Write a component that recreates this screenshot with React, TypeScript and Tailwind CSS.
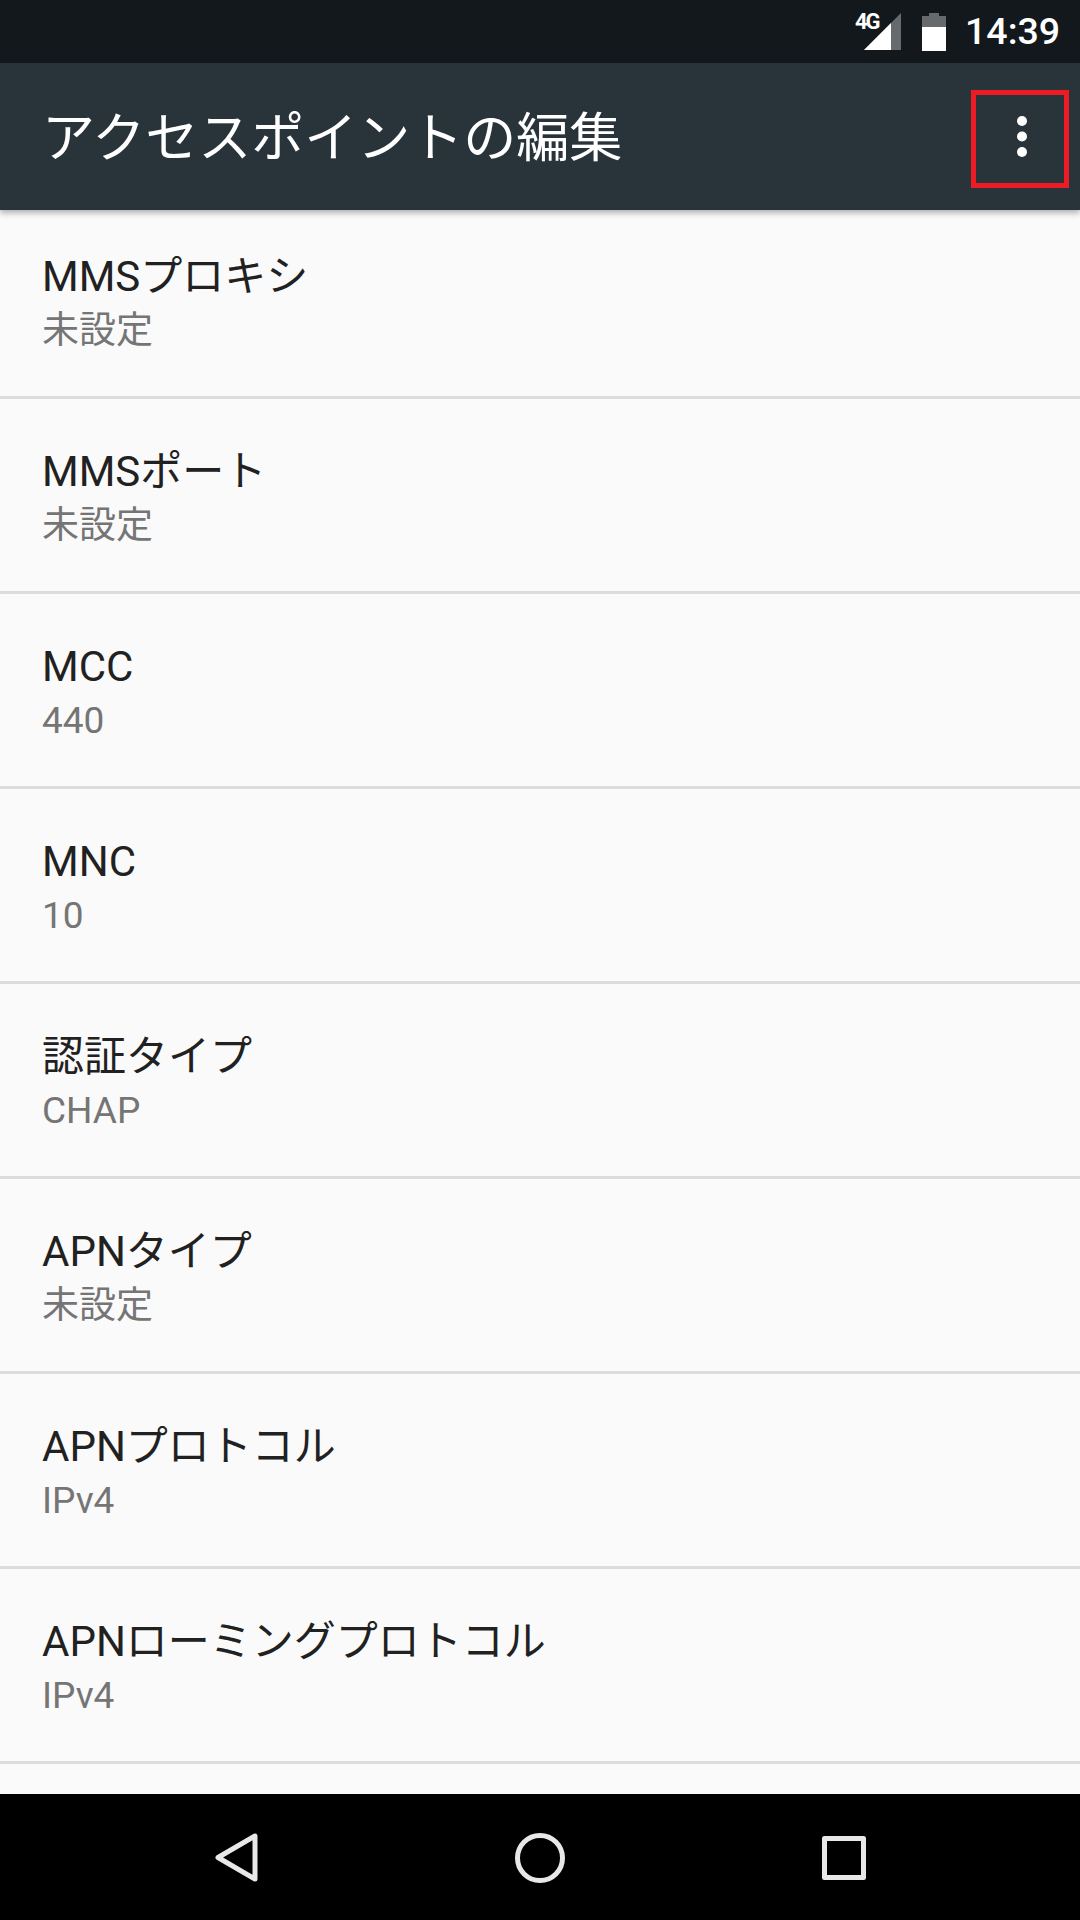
const rows = [
  { title: "MMSプロキシ", value: "未設定" },
  { title: "MMSポート", value: "未設定" },
  { title: "MCC", value: "440" },
  { title: "MNC", value: "10" },
  { title: "認証タイプ", value: "CHAP" },
  { title: "APNタイプ", value: "未設定" },
  { title: "APNプロトコル", value: "IPv4" },
  { title: "APNローミングプロトコル", value: "IPv4" },
];

const fontFamily = "font-['Roboto','Noto_Sans_CJK_JP',sans-serif]";

function StatusBar() {
  return (
    <div className="flex h-[63px] shrink-0 items-center bg-[#12181b] pl-[855px] text-white">
      <div className="relative h-[63px] w-[46px]">
        <span className="absolute left-0 top-[9px] text-[22px] leading-[26px] font-bold tracking-[-2px] text-white">
          4G
        </span>
        <svg className="absolute left-[9px] top-[13px]" width="37" height="37" viewBox="0 0 37 37">
          <path d="M37 0V37H0Z" fill="#666a6d" />
          <path d="M27 10V37H0Z" fill="#fff" />
        </svg>
      </div>
      <svg className="ml-[21px]" width="24" height="38" viewBox="0 0 24 38">
        <path d="M7 0H17V3H24V14H0V3H7Z" fill="#666a6d" />
        <path d="M0 14H24V38H0Z" fill="#fff" />
      </svg>
      <span className="ml-[19px] text-[37.5px] leading-none font-medium">14:39</span>
    </div>
  );
}

function Toolbar() {
  return (
    <div className="relative z-10 flex h-[147px] shrink-0 items-center justify-between bg-[#29333a] pl-[42px] pr-[11px] shadow-[0_3px_6px_rgba(0,0,0,0.3)]">
      <h1 className="mt-[6px] text-[53px] leading-none font-normal text-white">アクセスポイントの編集</h1>
      <div className="mt-[5px] flex h-[98px] w-[98px] items-center justify-center border-[5px] border-[#ed1c24] pb-[5px] pl-[4px]">
        <svg width="10" height="41" viewBox="0 0 10 41" fill="#fff">
          <circle cx="5" cy="5" r="5" />
          <circle cx="5" cy="20.5" r="5" />
          <circle cx="5" cy="36" r="5" />
        </svg>
      </div>
    </div>
  );
}

function NavBar() {
  return (
    <div className="flex h-[126px] shrink-0 items-start bg-black pl-[214px] pt-[39px]">
      <svg width="46" height="52" viewBox="0 0 46 52" fill="none" stroke="#e8e8e8" strokeWidth="5" strokeLinejoin="round" className="-mt-[1px]">
        <path d="M41 4V47L4 25.5Z" />
      </svg>
      <svg width="52" height="52" viewBox="0 0 52 52" fill="none" stroke="#e8e8e8" strokeWidth="5" className="-mt-[1px] ml-[254px]">
        <circle cx="26" cy="26" r="22.5" />
      </svg>
      <svg width="46" height="46" viewBox="0 0 46 46" fill="none" stroke="#e8e8e8" strokeWidth="5" strokeLinejoin="round" className="mt-[2px] ml-[255px]">
        <rect x="3.5" y="3.5" width="39" height="39" />
      </svg>
    </div>
  );
}

export default function App() {
  return (
    <div className={`flex h-[1920px] w-[1080px] flex-col overflow-hidden bg-[#fafafa] ${fontFamily}`}>
      <StatusBar />
      <Toolbar />
      <div className="min-h-0 flex-1 overflow-hidden">
        {rows.map((row, i) => (
          <div
            key={row.title}
            className={`flex flex-col justify-center border-b-[3px] border-[#dcdcdc] px-[42px] ${i === 0 ? "h-[189px] pt-[2px]" : "h-[195px] pt-[7px]"}`}
          >
            <div className="text-[42px] leading-[54px] text-[#212121]">{row.title}</div>
            <div className="text-[37px] leading-[54px] text-[#757575]">{row.value}</div>
          </div>
        ))}
      </div>
      <NavBar />
    </div>
  );
}
